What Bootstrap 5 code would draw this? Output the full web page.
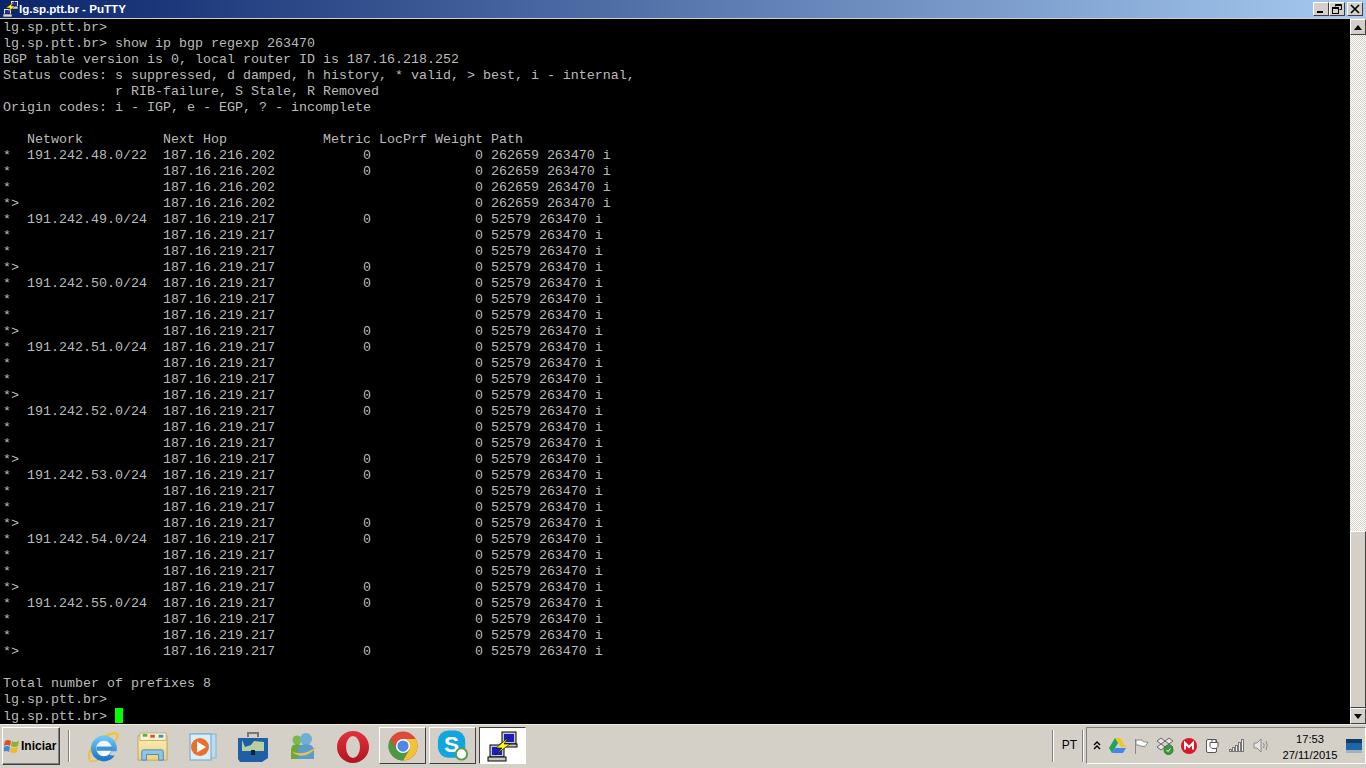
<!DOCTYPE html>
<html lang="pt"><head><meta charset="utf-8"><title>lg.sp.ptt.br - PuTTY</title>
<link rel="stylesheet" href="https://cdn.jsdelivr.net/npm/bootstrap@5.3.0/dist/css/bootstrap.min.css">
<style>
html,body{height:768px;overflow:hidden;background:#000;margin:0}
.shell{height:768px;width:1366px}
.titlebar{height:19px;background:linear-gradient(90deg,#0a246a 0,#a6caf0 100%);border-bottom:1px solid #d4d0c8;color:#fff;font:bold 11.6px/18px "Liberation Sans",sans-serif;padding-left:2px;gap:1px}
.titlebar>svg{flex:none}
.wbtn{width:16px;height:14px;background:#d4d0c8;border:1px solid;border-color:#fff #404040 #404040 #fff;display:flex;align-items:center;justify-content:center;padding:0}
.wbtns{margin-right:3px}
.wbtns .wbtn:nth-child(2){margin-right:2px}
.termarea{height:705px;background:#000}
.termtext{flex:1;margin:0;padding:1px 0 0 3px;overflow:hidden;color:#bbb;background:#000;font:13.333px/16px "Liberation Mono","Courier New",monospace;letter-spacing:0}
.cursor{display:inline-block;width:8px;height:15px;background:#0f0;vertical-align:-3px}
.sbar{width:16px;background-color:#fff;background-image:conic-gradient(#d4d0c8 25%,#fff 0 50%,#d4d0c8 0 75%,#fff 0);background-size:2px 2px}
.sbtn{width:16px;height:16px;background:#d4d0c8;border:1px solid;border-color:#fff #404040 #404040 #fff;display:flex;align-items:center;justify-content:center}
.sthumb{height:177px;background:#d4d0c8;border:1px solid;border-color:#fff #404040 #404040 #fff}
.strack{flex:1}
.taskbar{height:44px;background:#d4d0c8;border-top:1px solid #ece9e0;padding-left:2px}
.startbtn{width:58px;height:38px;margin-top:2px;background:#d4d0c8;border:1px solid;border-color:#fff #404040 #404040 #fff;box-shadow:inset -1px -1px 0 #808080;font:bold 12px "Liberation Sans",sans-serif;color:#000;gap:1px;padding-left:1px}
.startbtn svg{flex:none}
.vsep{width:2px;height:32px;margin-top:5px;border-left:1px solid #808080;border-right:1px solid #fff}
.qicon{width:50px;height:44px;display:flex;align-items:center;justify-content:center}
.qbtn{width:47px;height:37px;margin:2px 3px 0 0;display:flex;align-items:center;justify-content:center;border:1px solid;border-color:#fff #404040 #404040 #fff;background:#d4d0c8}
.qbtn.pressed{border-color:#404040 #fff #fff #404040;background-color:#fff}
.qgap{margin-left:1px}
.pt{font:12px "Liberation Sans",sans-serif;color:#000;width:28px;padding-left:3px;text-align:center;line-height:37px;margin-top:2px}
.tray{width:280px;height:37px;margin-top:2px;margin-left:2px;border:1px solid;border-color:#808080 #fff #fff #808080;padding-left:1px}
.ticon{width:24px;flex:none;display:flex;align-items:center;justify-content:center}
.ticon.chev{width:17px}
.ticon.scr{width:16px;margin-left:7px}
.clock{width:58px;flex:none;text-align:center;font:11.2px/16px "Liberation Sans",sans-serif;color:#000;margin-left:8px;margin-top:2px;white-space:nowrap}
</style></head><body>
<div class="shell d-flex flex-column">
<div class="titlebar d-flex align-items-center">
<svg width="16" height="16" viewBox="0 0 16 16"><rect x="2.500" y="8.500" width="6" height="5" fill="#2222b0" stroke="#e8e8e8"/><rect x="1" y="13" width="9" height="3" fill="#d8d8d8" stroke="#222" stroke-width=".6"/><rect x="9.500" y=".5" width="6" height="5" fill="#2222b0" stroke="#e8e8e8"/><rect x="8" y="5.500" width="8" height="2.500" fill="#d8d8d8" stroke="#222" stroke-width=".6"/><path d="M13 0 4 7h4l-3 5 8-7H9z" fill="#ff0" stroke="#222" stroke-width=".5"/></svg>
<span class="flex-grow-1">lg.sp.ptt.br - PuTTY</span>
<div class="wbtns d-flex">
<button class="wbtn" aria-label="Minimizar"><svg width="10" height="10"><rect x="1" y="7" width="6" height="2"/></svg></button>
<button class="wbtn" aria-label="Restaurar"><svg width="10" height="10" fill="none" stroke="#000"><path d="M3.500 2.500V.5h6v5h-2M3 1.500h6"/><rect x=".5" y="3.500" width="6" height="6"/><path d="M1 4.500h5"/></svg></button>
<button class="wbtn" aria-label="Fechar"><svg width="10" height="10" stroke="#000" stroke-width="1.600"><path d="M1 1l8 8M9 1l-8 8"/></svg></button>
</div>
</div>
<div class="termarea d-flex">
<pre class="termtext">lg.sp.ptt.br&gt;
lg.sp.ptt.br&gt; show ip bgp regexp 263470
BGP table version is 0, local router ID is 187.16.218.252
Status codes: s suppressed, d damped, h history, * valid, &gt; best, i - internal,
              r RIB-failure, S Stale, R Removed
Origin codes: i - IGP, e - EGP, ? - incomplete

   Network          Next Hop            Metric LocPrf Weight Path
*  191.242.48.0/22  187.16.216.202           0             0 262659 263470 i
*                   187.16.216.202           0             0 262659 263470 i
*                   187.16.216.202                         0 262659 263470 i
*&gt;                  187.16.216.202                         0 262659 263470 i
*  191.242.49.0/24  187.16.219.217           0             0 52579 263470 i
*                   187.16.219.217                         0 52579 263470 i
*                   187.16.219.217                         0 52579 263470 i
*&gt;                  187.16.219.217           0             0 52579 263470 i
*  191.242.50.0/24  187.16.219.217           0             0 52579 263470 i
*                   187.16.219.217                         0 52579 263470 i
*                   187.16.219.217                         0 52579 263470 i
*&gt;                  187.16.219.217           0             0 52579 263470 i
*  191.242.51.0/24  187.16.219.217           0             0 52579 263470 i
*                   187.16.219.217                         0 52579 263470 i
*                   187.16.219.217                         0 52579 263470 i
*&gt;                  187.16.219.217           0             0 52579 263470 i
*  191.242.52.0/24  187.16.219.217           0             0 52579 263470 i
*                   187.16.219.217                         0 52579 263470 i
*                   187.16.219.217                         0 52579 263470 i
*&gt;                  187.16.219.217           0             0 52579 263470 i
*  191.242.53.0/24  187.16.219.217           0             0 52579 263470 i
*                   187.16.219.217                         0 52579 263470 i
*                   187.16.219.217                         0 52579 263470 i
*&gt;                  187.16.219.217           0             0 52579 263470 i
*  191.242.54.0/24  187.16.219.217           0             0 52579 263470 i
*                   187.16.219.217                         0 52579 263470 i
*                   187.16.219.217                         0 52579 263470 i
*&gt;                  187.16.219.217           0             0 52579 263470 i
*  191.242.55.0/24  187.16.219.217           0             0 52579 263470 i
*                   187.16.219.217                         0 52579 263470 i
*                   187.16.219.217                         0 52579 263470 i
*&gt;                  187.16.219.217           0             0 52579 263470 i

Total number of prefixes 8
lg.sp.ptt.br&gt;
lg.sp.ptt.br&gt; <span class="cursor"></span></pre>
<div class="sbar d-flex flex-column">
<div class="sbtn"><svg width="8" height="5"><path d="M4 0 8 5H0z"/></svg></div>
<div class="strack"></div>
<div class="sthumb"></div>
<div class="sbtn"><svg width="8" height="5"><path d="M0 0h8L4 5z"/></svg></div>
</div>
</div>
<div class="taskbar d-flex">
<div class="startbtn d-flex align-items-center">
<svg width="16" height="16" viewBox="0 0 16 16"><path d="M1 3q3-2 6 0l-1 5q-3-2-6 0z" fill="#d9512c"/><path d="M8 3q3 2 7 0l-1 5q-3 2-7 0z" fill="#8ab530"/><path d="M0 9q3-2 6 0l-1 5q-3-2-6 0z" fill="#3a8ad8"/><path d="M7 9q3 2 7 0l-1 5q-3 2-7 0z" fill="#f0b928"/></svg>
<span>Iniciar</span>
</div>
<div class="vsep ms-2 me-2"></div>
<div class="qicon"><svg width="32" height="33" viewBox="0 0 34 34"><defs><linearGradient id="ieb" x1="0" y1="0" x2="0" y2="1"><stop offset="0" stop-color="#6cc4f0"/><stop offset="1" stop-color="#1f78c8"/></linearGradient></defs><circle cx="18" cy="18" r="12" fill="#f2f8fc"/><path d="M3 30C-1 20 12 5 28 2c5-1 6 3 2 8" fill="none" stroke="#eec33c" stroke-width="2.500"/><path d="M3 30c1 3 6 2 11-1" fill="none" stroke="#eec33c" stroke-width="2"/><circle cx="18" cy="18" r="11" fill="none" stroke="url(#ieb)" stroke-width="5.500"/><path d="M10 16h17v4.500H10z" fill="#3f92d8"/><path d="M26 21h8l-3 5-7-1z" fill="#d4d0c8"/></svg></div>
<div class="qicon"><svg width="34" height="30" viewBox="0 0 34 32"><defs><linearGradient id="fdr" x1="0" y1="0" x2="0" y2="1"><stop offset="0" stop-color="#fbeeb8"/><stop offset="1" stop-color="#eed27c"/></linearGradient></defs><path d="M1 4h31v26H1z" fill="url(#fdr)" stroke="#b8a560"/><path d="M3 1h28v8H3z" fill="#fbf3d0" stroke="#c0ad70"/><rect x="6" y="2" width="5" height="3" fill="#5fb04a"/><rect x="14" y="3" width="5" height="3" fill="#d0563a"/><rect x="23" y="3" width="5" height="3" fill="#3f8fd0"/><path d="M5 30V21a2 2 0 0 1 2-2h19a2 2 0 0 1 2 2v9h-5v-6H10v6z" fill="#8cc4ea" stroke="#4a88b8"/></svg></div>
<div class="qicon"><svg width="30" height="30" viewBox="0 0 30 30"><rect x="6" y="2" width="22" height="24" fill="#bcdcf2" stroke="#86b4d4"/><rect x="2" y="2" width="21" height="26" fill="#d8eefa" stroke="#6aa4d0"/><circle cx="12" cy="15" r="9" fill="#e8722a"/><path d="M9 9.500v11l9-5.500z" fill="#fff"/></svg></div>
<div class="qicon"><svg width="32" height="32" viewBox="0 0 32 32"><path d="M11 6V2h10v4" fill="none" stroke="#777" stroke-width="2"/><path d="M1 7h30v20l-6 4H3l-2-3z" fill="#1f5fa6"/><path d="M5 9l3 7 6-2 3-4 10 1v9H5z" fill="#b8d0a0"/><rect x="14" y="19" width="4" height="5" fill="#123"/></svg></div>
<div class="qicon"><svg width="32" height="30" viewBox="0 0 32 30"><circle cx="10" cy="8" r="4.500" fill="#7cb84e"/><path d="M4 27v-9q0-6 6-6t6 6v9z" fill="#6aa83e"/><circle cx="19" cy="7" r="6" fill="#70aed6"/><path d="M11 27V19q0-7 8-7t8 7v8z" fill="#5a9ccb"/><path d="M1 17q12 10 30-3-12 14-23 8z" fill="#eec150"/></svg></div>
<div class="qicon"><svg width="32" height="32" viewBox="0 0 32 32"><defs><linearGradient id="opr" x1="0" y1="0" x2="0" y2="1"><stop offset="0" stop-color="#e2323c"/><stop offset="1" stop-color="#b0141f"/></linearGradient></defs><path fill-rule="evenodd" fill="url(#opr)" d="M16 0a16 16 0 1 1 0 32a16 16 0 1 1 0-32zM16 5a7 11 0 1 0 0 22a7 11 0 1 0 0-22z"/></svg></div>
<div class="qbtn qgap"><svg width="30" height="30" viewBox="0 0 32 32"><circle cx="16" cy="16" r="15.500" fill="#dd4a3a"/><path d="M29.500 8.500A15.500 15.500 0 0 1 16 31.500l7-12-7-11z" fill="#f0c534"/><path d="M16 31.500A15.500 15.500 0 0 1 2.500 8.500L10 20l6 2 7-3z" fill="#4a9a44"/><circle cx="16" cy="16" r="7.500" fill="#fff"/><circle cx="16" cy="16" r="6" fill="#4f86e8"/></svg></div>
<div class="qbtn"><svg width="32" height="33" viewBox="0 0 34 34"><rect x="1" y="1" width="29" height="29" rx="11" fill="#12a5e0"/><text x="15.500" y="24" text-anchor="middle" font-family="Liberation Sans" font-weight="700" font-size="24" fill="#fff">S</text><circle cx="26" cy="26" r="6" fill="#fff" stroke="#5a9c4a" stroke-width="2"/></svg></div>
<div class="qbtn pressed"><svg width="32" height="32" viewBox="0 0 32 32"><rect x="15" y="2" width="14" height="12" fill="#c8c8c8" stroke="#000"/><rect x="17" y="4" width="10" height="8" fill="#1c1cc0"/><rect x="13" y="14" width="17" height="3" fill="#c8c8c8" stroke="#000"/><rect x="3" y="15" width="14" height="12" fill="#c8c8c8" stroke="#000"/><rect x="5" y="17" width="10" height="8" fill="#1c1cc0"/><rect x="1" y="27" width="18" height="4" fill="#c8c8c8" stroke="#000"/><path d="M22 7 9 18h6L8 25l15-11h-6l5-7z" fill="#ff0" stroke="#000" stroke-width=".6"/></svg></div>
<div class="flex-grow-1"></div>
<div class="vsep"></div>
<div class="pt">PT</div>
<div class="vsep"></div>
<div class="tray d-flex align-items-center">
<div class="ticon chev"><svg width="8" height="9" fill="none" stroke="#000" stroke-width="1.400"><path d="M1 4l3-3 3 3M1 8l3-3 3 3"/></svg></div>
<div class="ticon"><svg width="17" height="15" viewBox="0 0 17 15"><path d="M6 0h5l6 9h-5z" fill="#f5c518"/><path d="M6 0l3 5-6 10-3-5z" fill="#1ea362"/><path d="M3 15l3-5h11l-3 5z" fill="#4285f4"/></svg></div>
<div class="ticon"><svg width="16" height="16" viewBox="0 0 16 16" fill="#fff" stroke="#888"><path d="M2.500 1v15"/><path d="M3 2h6l1 1.500 5 1-3 4-5-.5-1-1H3z"/></svg></div>
<div class="ticon"><svg width="18" height="18" viewBox="0 0 18 18" fill="#e6e6e6" stroke="#666"><path d="M5 1 9 4 5 7 1 4zM13 1l4 3-4 3-4-3zM5 7l4 3-4 3-4-3zM13 7l4 3-4 3-4-3z"/><circle cx="12.500" cy="13" r="4.500" fill="#3d9a3d" stroke="#2a7a2a"/><path d="M10.500 13l1.500 1.500 2.500-3" fill="none" stroke="#fff"/></svg></div>
<div class="ticon"><svg width="16" height="16" viewBox="0 0 16 16"><circle cx="8" cy="8" r="8" fill="#d9172b"/><path d="M4 11.500V5l4 4 4-4v6.500" fill="none" stroke="#fff" stroke-width="2"/></svg></div>
<div class="ticon"><svg width="17" height="17" viewBox="0 0 17 17" fill="#fff" stroke="#555"><rect x="1.500" y="2.500" width="10" height="13" rx="1.500"/><path d="M5 5.500h8v4l-2 2H7l-2-2zM7 2v3.500M11 2v3.500"/></svg></div>
<div class="ticon"><svg width="16" height="13" viewBox="0 0 16 13" fill="#eee" stroke="#777"><rect x=".5" y="10.500" width="2" height="2"/><rect x="3.500" y="8.500" width="2" height="4"/><rect x="6.500" y="6.500" width="2" height="6"/><rect x="9.500" y="3.500" width="2" height="9"/><rect x="12.500" y=".5" width="2" height="12"/></svg></div>
<div class="ticon"><svg width="17" height="15" viewBox="0 0 17 15" fill="#e6e6e6" stroke="#888"><path d="M1 5h3l4-4v13l-4-4H1z"/><path d="M10.500 5q1.500 2.500 0 5M13 3q2.500 4.500 0 9" fill="none"/></svg></div>
<div class="clock">17:53<br>27/11/2015</div>
<div class="ticon scr"><svg width="16" height="14" viewBox="0 0 16 14"><rect width="16" height="12" fill="#1f66a8"/><rect width="16" height="4" fill="#123c66"/><rect y="11" width="16" height="3" fill="#9db2c4"/></svg></div>
</div>
</div>
</div>
</body></html>
